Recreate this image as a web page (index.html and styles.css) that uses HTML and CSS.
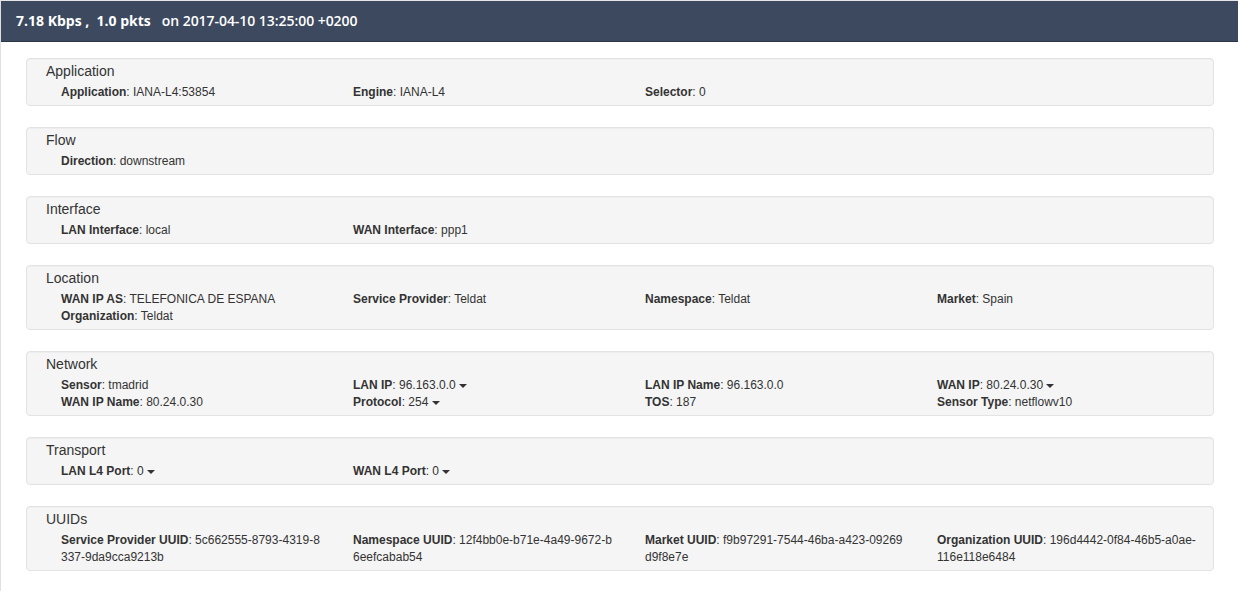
FILE: index.html
```html
<!DOCTYPE html>
<html>
<head>
<meta charset="utf-8">
<link rel="stylesheet" href="styles.css">
</head>
<body>
<div class="page">
  <div class="header">7.18 Kbps ,&nbsp; 1.0 pkts<span class="on">on 2017-04-10 13:25:00 +0200</span></div>
  <div class="content">
    <div class="well">
      <div class="title">Application</div>
      <div class="grid">
        <div><b>Application</b>: IANA-L4:53854</div>
        <div><b>Engine</b>: IANA-L4</div>
        <div><b>Selector</b>: 0</div>
      </div>
    </div>
    <div class="well">
      <div class="title">Flow</div>
      <div class="grid">
        <div><b>Direction</b>: downstream</div>
      </div>
    </div>
    <div class="well">
      <div class="title">Interface</div>
      <div class="grid">
        <div><b>LAN Interface</b>: local</div>
        <div><b>WAN Interface</b>: ppp1</div>
      </div>
    </div>
    <div class="well">
      <div class="title">Location</div>
      <div class="grid">
        <div><b>WAN IP AS</b>: TELEFONICA DE ESPANA</div>
        <div><b>Service Provider</b>: Teldat</div>
        <div><b>Namespace</b>: Teldat</div>
        <div><b>Market</b>: Spain</div>
        <div><b>Organization</b>: Teldat</div>
      </div>
    </div>
    <div class="well">
      <div class="title">Network</div>
      <div class="grid">
        <div><b>Sensor</b>: tmadrid</div>
        <div><b>LAN IP</b>: 96.163.0.0 <span class="caret"></span></div>
        <div><b>LAN IP Name</b>: 96.163.0.0</div>
        <div><b>WAN IP</b>: 80.24.0.30 <span class="caret"></span></div>
        <div><b>WAN IP Name</b>: 80.24.0.30</div>
        <div><b>Protocol</b>: 254 <span class="caret"></span></div>
        <div><b>TOS</b>: 187</div>
        <div><b>Sensor Type</b>: netflowv10</div>
      </div>
    </div>
    <div class="well">
      <div class="title">Transport</div>
      <div class="grid">
        <div><b>LAN L4 Port</b>: 0 <span class="caret"></span></div>
        <div><b>WAN L4 Port</b>: 0 <span class="caret"></span></div>
      </div>
    </div>
    <div class="well">
      <div class="title">UUIDs</div>
      <div class="grid">
        <div class="brk"><b>Service Provider UUID</b>: 5c662555-8793-4319-8337-9da9cca9213b</div>
        <div class="brk"><b>Namespace UUID</b>: 12f4bb0e-b71e-4a49-9672-b6eefcabab54</div>
        <div class="brk"><b>Market UUID</b>: f9b97291-7544-46ba-a423-09269d9f8e7e</div>
        <div class="brk"><b>Organization UUID</b>: 196d4442-0f84-46b5-a0ae-116e118e6484</div>
      </div>
    </div>
  </div>
</div>
</body>
</html>
```
FILE: styles.css
```css
* { box-sizing: border-box; }
html, body { margin: 0; padding: 0; background: #fff; }
body { font-family: "Liberation Sans", Arial, sans-serif; color: #333; }
.page {
  width: 1238px;
  height: 591px;
  border-left: 1px solid #e0e0e0;
  border-top: 1px solid #e6e6e6;
  overflow: hidden;
}
.header {
  height: 41px;
  background: #3c495f;
  border-bottom: 1px solid #2c3647;
  color: #fff;
  font-family: "Open Sans", sans-serif;
  font-weight: 700;
  font-size: 14px;
  line-height: 40px;
  padding-left: 15px;
  white-space: pre;
}
.header .on { font-weight: 600; margin-left: 11px; letter-spacing: -0.05px; }
.content {
  padding: 16px 24px 0 25px;
  display: flex;
  flex-direction: column;
  gap: 21px;
}
.well {
  background: #f5f5f5;
  border: 1px solid #e3e3e3;
  border-radius: 4px;
  padding: 4px 0 4px 19px;
  box-shadow: inset 0 1px 1px rgba(0,0,0,0.03);
}
.title {
  font-size: 14px;
  line-height: 17px;
  color: #333;
  margin-bottom: 4px;
}
.grid {
  display: grid;
  grid-template-columns: repeat(4, 292px);
  padding-left: 15px;
  font-size: 12px;
  line-height: 17px;
}
.grid > div { padding-right: 30px; }
.grid b { font-weight: 700; }
.brk { word-break: break-all; }
.caret {
  display: inline-block;
  width: 0;
  height: 0;
  border-left: 4px solid transparent;
  border-right: 4px solid transparent;
  border-top: 4px solid #333;
  vertical-align: middle;
  margin-left: 0;
}
```
